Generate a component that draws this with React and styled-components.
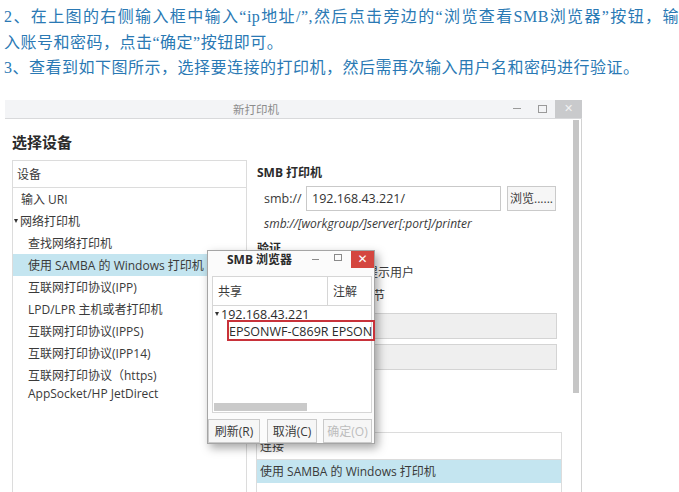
import React from "react";
import styled, { createGlobalStyle } from "styled-components";

const GlobalStyle = createGlobalStyle`
  html, body {
    margin: 0;
    padding: 0;
    background: #fff;
  }
  body {
    width: 679px;
    height: 492px;
    overflow: hidden;
  }
`;

const uiFont = `"Open Sans", "Noto Sans CJK SC", sans-serif`;

const Page = styled.div`
  padding: 4px 0 0 4px;
`;

//Article text above the screenshot
const Article = styled.div`
  font-family: "Liberation Serif", "Noto Sans CJK SC", serif;
  font-size: 16px;
  letter-spacing: 0.5px;
  line-height: 25.5px;
  color: #2a79b4;
`;

const Line = styled.div`
  width: 675px;
  white-space: ${(p) => (p.$justify ? "normal" : "nowrap")};
  text-align: ${(p) => (p.$justify ? "justify" : "left")};
  text-align-last: ${(p) => (p.$justify ? "justify" : "auto")};
`;

//The printer window screenshot
const Shot = styled.div`
  margin: 19px 0 0 1px;
  width: 577px;
  height: 392px;
  background: #fff;
  display: flex;
  flex-direction: column;
  overflow: hidden;
  font-family: ${uiFont};
  color: #3a3a3a;
`;

const TitleBar = styled.div`
  height: 18px;
  flex-shrink: 0;
  display: flex;
  align-items: center;
  background: #f3f4f6;
  border-bottom: 1px solid #d8d9db;
`;

const TitleText = styled.span`
  margin-left: 228px;
  font-size: 11.5px;
  color: #8c8c8c;
`;

const WinControls = styled.div`
  margin-left: auto;
  display: flex;
  align-items: center;
  height: 100%;
`;

const Minus = styled.span`
  width: 8px;
  height: 1px;
  background: #9a9a9a;
  margin-right: 17px;
`;

const Square = styled.span`
  width: 7px;
  height: 6px;
  border: 1px solid #9a9a9a;
  margin-right: 8px;
`;

const CloseBtn = styled.span`
  width: ${(p) => p.$w || 27}px;
  height: 100%;
  display: flex;
  align-items: center;
  justify-content: center;
  background: ${(p) => (p.$red ? "#d4463f" : "#c9cacc")};
  color: ${(p) => (p.$red ? "#fff" : "#f2f2f2")};
  font-size: ${(p) => (p.$red ? "12px" : "11px")};
  font-family: "DejaVu Sans", sans-serif;
`;

const Body = styled.div`
  flex: 1;
  display: flex;
  position: relative;
  min-height: 0;
`;

const LeftCol = styled.div`
  width: 242px;
  padding-left: 7px;
  box-sizing: border-box;
  flex-shrink: 0;
`;

const Heading = styled.div`
  margin-top: 13px;
  font-size: 15px;
  font-weight: 700;
  line-height: 20px;
  color: #2b2b2b;
`;

const ListBox = styled.div`
  margin-top: 8px;
  width: 235px;
  height: 400px;
  box-sizing: border-box;
  border: 1px solid #dcdcdc;
`;

const ListHeader = styled.div`
  height: 27px;
  box-sizing: border-box;
  border-bottom: 1px solid #dcdcdc;
  display: flex;
  align-items: center;
  padding-left: ${(p) => p.$pad || 4}px;
  font-size: 12px;
`;

const ListRow = styled.div`
  height: ${(p) => p.$h || 22}px;
  display: flex;
  align-items: center;
  padding-left: ${(p) => p.$indent}px;
  font-size: 12px;
  white-space: nowrap;
  background: ${(p) => (p.$selected ? "#c4e5f0" : "transparent")};
`;

const Caret = styled.span`
  width: 0;
  height: 0;
  border-left: 2.5px solid transparent;
  border-right: 2.5px solid transparent;
  border-top: 4px solid #333;
  margin-right: 2px;
`;

const RightCol = styled.div`
  margin-left: 9px;
  width: 306px;
  flex-shrink: 0;
  display: flex;
  flex-direction: column;
  padding-top: 45px;

  & > * {
    flex-shrink: 0;
  }
`;

const SectionTitle = styled.div`
  font-size: 12px;
  font-weight: 700;
  line-height: ${(p) => p.$lh || 18}px;
  margin-top: ${(p) => p.$mt || 0}px;
  padding-left: 1px;
  color: #2b2b2b;
`;

const InputRow = styled.div`
  margin-top: 4px;
  height: 25px;
  display: flex;
  align-items: center;
  padding-left: 8px;
  font-size: 12.5px;
`;

const Prefix = styled.span`
  width: 42px;
`;

const TextInput = styled.div`
  width: 195px;
  height: 25px;
  box-sizing: border-box;
  border: 1px solid #c9c9c9;
  padding-left: 5px;
  display: flex;
  align-items: center;
  color: #333;
`;

const Button = styled.div`
  width: ${(p) => p.$w}px;
  height: ${(p) => p.$h || 25}px;
  margin-left: ${(p) => p.$ml || 0}px;
  box-sizing: border-box;
  border: 1px solid #cacaca;
  background: #f6f6f6;
  display: flex;
  align-items: center;
  justify-content: center;
  font-size: 12px;
  white-space: nowrap;
  color: ${(p) => (p.$disabled ? "#bdbdbd" : "#3a3a3a")};
`;

const Hint = styled.div`
  margin-top: 5px;
  line-height: 16px;
  padding-left: 8px;
  font-size: 12px;
  font-style: italic;
  color: #3a3a3a;
`;

const RadioRow = styled.div`
  margin-top: ${(p) => p.$mt}px;
  line-height: 16px;
  padding-left: ${(p) => p.$indent}px;
  font-size: 12px;
  white-space: nowrap;
`;

const Field = styled.div`
  margin-top: ${(p) => p.$mt}px;
  margin-left: 73px;
  width: 228px;
  height: 26px;
  box-sizing: border-box;
  background: #efefef;
  border: 1px solid #d4d4d4;
`;

const LowerBox = styled.div`
  margin-top: 62px;
  width: 306px;
  height: 120px;
  box-sizing: border-box;
  border: 1px solid #dcdcdc;
`;

const Scroll = styled.div`
  margin-left: 10px;
  width: 10px;
  box-sizing: border-box;
  padding: 1px 2px 0 1px;
  border-right: 1px solid #d2d2d2;
`;

const Thumb = styled.div`
  height: 273px;
  background: #c6c6c6;
`;

//SMB browser dialog floating over the window
const Dialog = styled.div`
  position: absolute;
  left: 202px;
  top: 131px;
  width: 168px;
  height: 194px;
  box-sizing: border-box;
  border: 1px solid #a5a5a5;
  background: #fbfbfb;
  box-shadow: 3px 4px 9px rgba(0, 0, 0, 0.35);
  display: flex;
  flex-direction: column;
`;

const DlgTitleBar = styled.div`
  height: 17px;
  flex-shrink: 0;
  display: flex;
  align-items: center;
  padding-left: 19px;
  font-size: 12px;
  font-weight: 700;
  color: #2b2b2b;
`;

const DlgControls = styled.div`
  margin-left: auto;
  display: flex;
  align-items: center;
  height: 100%;
`;

const DlgMinus = styled.span`
  width: 7px;
  height: 1px;
  background: #8a8a8a;
  margin-right: 15px;
`;

const DlgSquare = styled.span`
  width: 6px;
  height: 5px;
  border: 1px solid #8a8a8a;
  margin-right: 9px;
  margin-top: -4px;
`;

const DlgFrame = styled.div`
  margin: 8px 2px 0 4px;
  height: 137px;
  flex-shrink: 0;
  box-sizing: border-box;
  border: 1px solid #d6d6d6;
  background: #fff;
  display: flex;
  flex-direction: column;
  font-weight: 400;
`;

const DlgHeader = styled.div`
  height: 29px;
  flex-shrink: 0;
  box-sizing: border-box;
  border-bottom: 1px solid #d6d6d6;
  display: flex;
  font-size: 12px;
  color: #3a3a3a;
`;

const HeadCell = styled.div`
  display: flex;
  align-items: center;
  padding-left: 5px;
  width: ${(p) => p.$w}px;
  border-right: ${(p) => (p.$sep ? "1px solid #d6d6d6" : "none")};
`;

const TreeRow = styled.div`
  height: ${(p) => p.$h}px;
  display: flex;
  align-items: center;
  padding-left: ${(p) => p.$indent}px;
  font-size: 12.5px;
  white-space: nowrap;
  color: #2b2b2b;
`;

const HScroll = styled.div`
  margin: auto 0 1px 1px;
  width: 93px;
  height: 8px;
  background: #cacaca;
`;

const DlgButtons = styled.div`
  margin-top: 6px;
  display: flex;
`;

const RedMark = styled.div`
  position: absolute;
  left: 19px;
  top: 69px;
  width: 148px;
  height: 21px;
  box-sizing: border-box;
  border: 2px solid #c8323a;
`;

const deviceRows = [
  { text: "输入 URI", indent: 8 },
  { text: "网络打印机", indent: 1, caret: true },
  { text: "查找网络打印机", indent: 15 },
  { text: "使用 SAMBA 的 Windows 打印机", indent: 15, selected: true },
  { text: "互联网打印协议(IPP)", indent: 15 },
  { text: "LPD/LPR 主机或者打印机", indent: 15 },
  { text: "互联网打印协议(IPPS)", indent: 15 },
  { text: "互联网打印协议(IPP14)", indent: 15 },
  { text: "互联网打印协议（https)", indent: 15 },
  { text: "AppSocket/HP JetDirect", indent: 15, h: 16 },
];

const App = () => {
  return (
    <Page lang="zh-CN">
      <GlobalStyle />
      <Article>
        <Line $justify>
          2、在上图的右侧输入框中输入“ip地址/”,然后点击旁边的“浏览查看SMB浏览器”按钮，输
        </Line>
        <Line>入账号和密码，点击“确定”按钮即可。</Line>
        <Line>3、查看到如下图所示，选择要连接的打印机，然后需再次输入用户名和密码进行验证。</Line>
      </Article>

      <Shot>
        <TitleBar>
          <TitleText>新打印机</TitleText>
          <WinControls>
            <Minus />
            <Square />
            <CloseBtn>✕</CloseBtn>
          </WinControls>
        </TitleBar>

        <Body>
          <LeftCol>
            <Heading>选择设备</Heading>
            <ListBox>
              <ListHeader>设备</ListHeader>
              {deviceRows.map((row) => (
                <ListRow
                  key={row.text}
                  $indent={row.indent}
                  $selected={row.selected}
                  $h={row.h}
                >
                  {row.caret && <Caret />}
                  {row.text}
                </ListRow>
              ))}
            </ListBox>
          </LeftCol>

          <RightCol>
            <SectionTitle>SMB 打印机</SectionTitle>
            <InputRow>
              <Prefix>smb://</Prefix>
              <TextInput>192.168.43.221/</TextInput>
              <Button $w={49} $ml={6}>
                浏览......
              </Button>
            </InputRow>
            <Hint>smb://[workgroup/]server[:port]/printer</Hint>
            <SectionTitle $mt={9} $lh={16}>
              验证
            </SectionTitle>
            <RadioRow $mt={8} $indent={62}>
              在需要时提示用户
            </RadioRow>
            <RadioRow $mt={7} $indent={57}>
              设置认证细节
            </RadioRow>
            <Field $mt={9} />
            <Field $mt={5} />
            <LowerBox>
              <ListHeader $pad={3}>连接</ListHeader>
              <ListRow $indent={3} $selected $h={23}>
                使用 SAMBA 的 Windows 打印机
              </ListRow>
            </LowerBox>
          </RightCol>

          <Scroll>
            <Thumb />
          </Scroll>

          <Dialog>
            <DlgTitleBar>
              SMB 浏览器
              <DlgControls>
                <DlgMinus />
                <DlgSquare />
                <CloseBtn $red $w={23}>
                  ✕
                </CloseBtn>
              </DlgControls>
            </DlgTitleBar>
            <DlgFrame>
              <DlgHeader>
                <HeadCell $w={115} $sep>
                  共享
                </HeadCell>
                <HeadCell $w={40}>注解</HeadCell>
              </DlgHeader>
              <TreeRow $h={17} $indent={2}>
                <Caret />
                192.168.43.221
              </TreeRow>
              <TreeRow $h={17} $indent={16}>
                EPSONWF-C869R EPSON
              </TreeRow>
              <HScroll />
            </DlgFrame>
            <DlgButtons>
              <Button $w={52} $h={24}>
                刷新(R)
              </Button>
              <Button $w={50} $h={24} $ml={7}>
                取消(C)
              </Button>
              <Button $w={49} $h={24} $ml={6} $disabled>
                确定(O)
              </Button>
            </DlgButtons>
            <RedMark />
          </Dialog>
        </Body>
      </Shot>
    </Page>
  );
};

export default App;
